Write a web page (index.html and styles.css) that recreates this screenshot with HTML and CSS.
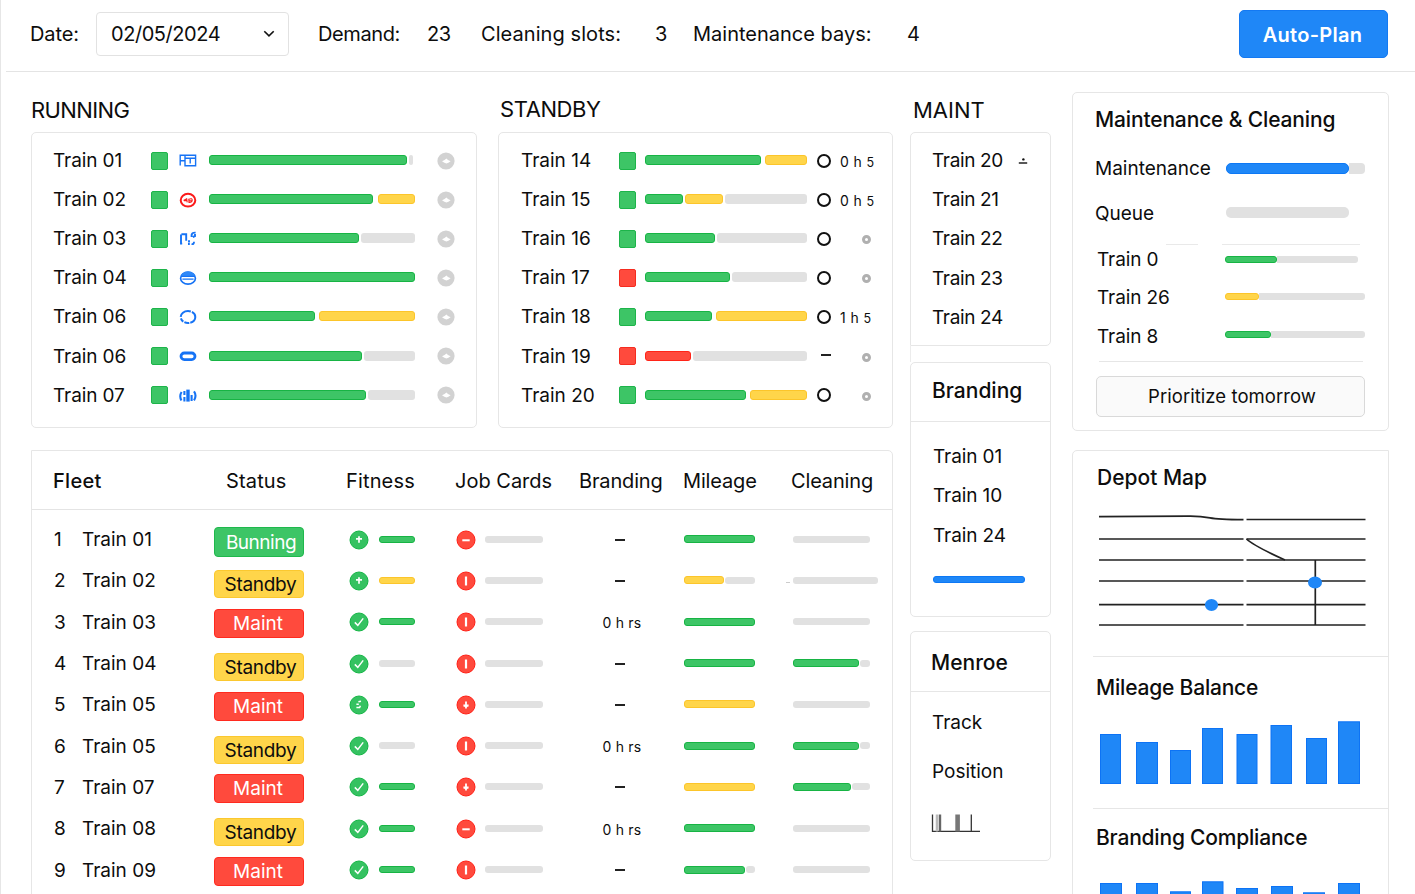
FILE: index.html
```html
<!DOCTYPE html>
<html lang="en">
<head>
<meta charset="utf-8">
<title>Train Induction Planner</title>
<link rel="stylesheet" href="styles.css">
</head>
<body>
<svg class="defs" aria-hidden="true">
  <symbol id="go" viewBox="0 0 18 18"><circle cx="9" cy="9" r="8.6" fill="#d2d2d2"/><path d="M5 9.2 7.6 8 9.4 6.6l1.6 1.4 2.6 1.2-2.2 1.6-2 .6-2-.6z" fill="#fff"/></symbol>
  <symbol id="plus" viewBox="0 0 20 20"><circle cx="10" cy="10" r="9" fill="#35c261" stroke="#14b545"/><path d="M10 6.2v6.6M7 8.9h6" stroke="#fff" stroke-width="1.7"/></symbol>
  <symbol id="check" viewBox="0 0 20 20"><circle cx="10" cy="10" r="9" fill="#35c261" stroke="#14b545"/><path d="m5.8 10.4 3 3 5.4-7" fill="none" stroke="#fff" stroke-width="1.5"/></symbol>
  <symbol id="dots" viewBox="0 0 20 20"><circle cx="10" cy="10" r="9" fill="#35c261" stroke="#14b545"/><path d="M9.4 6.8 12 6.2M7.4 9.2h2.4M7.4 12.6h3.2l.8-1.8" fill="none" stroke="#fff" stroke-width="1.5"/></symbol>
  <symbol id="minus" viewBox="0 0 20 20"><circle cx="10" cy="10" r="9" fill="#ff4a3d" stroke="#ff2016"/><path d="M6.3 10.3h7.4" stroke="#fff" stroke-width="2"/></symbol>
  <symbol id="bar" viewBox="0 0 20 20"><circle cx="10" cy="10" r="9" fill="#ff4a3d" stroke="#ff2016"/><path d="M10 5.5v9" stroke="#fff" stroke-width="2.2"/></symbol>
  <symbol id="down" viewBox="0 0 20 20"><circle cx="10" cy="10" r="9" fill="#ff4a3d" stroke="#ff2016"/><path d="M9.1 6.6h1.8v3h1.7v1.8l-1.7.6v1.4H9.1V12l-1.7-.6V9.6h1.7z" fill="#fff"/></symbol>
</svg>
<div class="app">
  <header class="topbar">
    <span class="lbl-date">Date:</span>
    <div class="select"><span>02/05/2024</span><svg width="12" height="8" viewBox="0 0 12 8"><path d="m1.3 1.2 4.7 4.6 4.7-4.6" fill="none" stroke="#111" stroke-width="1.6"/></svg></div>
    <span class="lbl-demand">Demand:</span><span class="val-demand">23</span>
    <span class="lbl-slots">Cleaning slots:</span><span class="val-slots">3</span>
    <span class="lbl-bays">Maintenance bays:</span><span class="val-bays">4</span>
    <button class="primary">Auto-Plan</button>
  </header>

  <main class="content">
    <div class="left">
      <div class="boards">
        <section class="running">
          <h2>RUNNING</h2>
          <div class="card board">
            <div class="run-row"><span>Train 01</span><i class="sq"></i>
              <svg class="kind" viewBox="0 0 18 18"><path d="M1.2 13.4V3.2H6M1.2 8.8H6M6 3.2h10.6v10.6H6zM6 6.2h10.6M11.2 6.2v5.4" fill="none" stroke="#1673f5" stroke-width="1.4"/></svg>
              <div class="track"><b class="g" style="width:198px"></b><b class="n" style="width:4px"></b></div><svg class="go"><use href="#go"/></svg></div>
            <div class="run-row"><span>Train 02</span><i class="sq"></i>
              <svg class="kind" viewBox="0 0 18 18"><ellipse cx="9" cy="9.2" rx="7.3" ry="6.4" fill="none" stroke="#fb1a1a" stroke-width="2"/><path d="m4.6 9.6 3.6-2M5 9.6h2.8M7.8 8l.4 3.4M9.8 8.2q3.6-1.4 3.4 1T10 11.4zM9.8 9.8h3" fill="none" stroke="#fb1a1a" stroke-width="1.1"/></svg>
              <div class="track"><b class="g" style="width:164px"></b><b class="y wide" style="width:37px"></b></div><svg class="go"><use href="#go"/></svg></div>
            <div class="run-row"><span>Train 03</span><i class="sq"></i>
              <svg class="kind" viewBox="0 0 18 18"><path d="M2 14.4V4.6M2.4 4.2h4.8v6.6M1.4 13.6h1.8M10 10.2v2.2M9 14h1.8M12.6 14q2.4.6 2.4-2.2M12.6 7V4.8q.4-2.4 4-2.2M16 4v2.2l-2.2.8" fill="none" stroke="#1673f5" stroke-width="1.9"/></svg>
              <div class="track"><b class="g" style="width:150px"></b><b class="n" style="width:54px"></b></div><svg class="go"><use href="#go"/></svg></div>
            <div class="run-row"><span>Train 04</span><i class="sq"></i>
              <svg class="kind" viewBox="0 0 18 18"><ellipse cx="9" cy="9.2" rx="7.4" ry="6" fill="#fff" stroke="#1673f5" stroke-width="1.7"/><path d="M2 7.2Q4 2.6 9 2.6t7 4.6z" fill="#2f88f7"/><path d="M2 7.4h14M3.4 10.2h11.2" stroke="#1673f5" stroke-width="1.2"/></svg>
              <div class="track"><b class="g" style="width:206px"></b></div><svg class="go"><use href="#go"/></svg></div>
            <div class="run-row"><span>Train 06</span><i class="sq"></i>
              <svg class="kind" viewBox="0 0 18 18"><ellipse cx="9" cy="9" rx="7.3" ry="6" fill="none" stroke="#1673f5" stroke-width="2" stroke-dasharray="8 1 5 1.2 4 1.6 13 1.2"/></svg>
              <div class="track"><b class="g" style="width:106px"></b><b class="y mid" style="width:96px"></b></div><svg class="go"><use href="#go"/></svg></div>
            <div class="run-row"><span>Train 06</span><i class="sq"></i>
              <svg class="kind" viewBox="0 0 18 18"><rect x="2" y="6" width="14" height="6.6" rx="3.3" fill="none" stroke="#1673f5" stroke-width="2.8"/></svg>
              <div class="track"><b class="g" style="width:153px"></b><b class="n" style="width:51px"></b></div><svg class="go"><use href="#go"/></svg></div>
            <div class="run-row"><span>Train 07</span><i class="sq"></i>
              <svg class="kind" viewBox="0 0 18 18"><path d="M2.6 6Q0 10 2.4 14.4M5.4 5v4M5.4 11v4.6M15 5.4q3 4.2 0 9M12.6 9v6" fill="none" stroke="#1673f5" stroke-width="2.1"/><path d="M9 3.6v12" stroke="#1673f5" stroke-width="3.4"/></svg>
              <div class="track"><b class="g" style="width:157px"></b><b class="n" style="width:47px"></b></div><svg class="go"><use href="#go"/></svg></div>
          </div>
        </section>
        <section class="standby">
          <h2>STANDBY</h2>
          <div class="card board">
            <div class="sb-row"><span>Train 14</span><i class="sq"></i><div class="track"><b class="g" style="width:116px"></b><b class="y mid" style="width:42px"></b></div><i class="ring"></i><small>0 h <em>5</em></small></div>
            <div class="sb-row"><span>Train 15</span><i class="sq"></i><div class="track"><b class="g" style="width:38px"></b><b class="y" style="width:38px"></b><b class="n" style="width:82px"></b></div><i class="ring"></i><small>0 h <em>5</em></small></div>
            <div class="sb-row"><span>Train 16</span><i class="sq"></i><div class="track"><b class="g" style="width:70px"></b><b class="n" style="width:90px"></b></div><i class="ring"></i><i class="dot"></i></div>
            <div class="sb-row"><span>Train 17</span><i class="sq red"></i><div class="track"><b class="g" style="width:85px"></b><b class="n" style="width:75px"></b></div><i class="ring"></i><i class="dot"></i></div>
            <div class="sb-row"><span>Train 18</span><i class="sq"></i><div class="track"><b class="g" style="width:67px"></b><b class="y mid" style="width:91px"></b></div><i class="ring"></i><small>1 h <em>5</em></small></div>
            <div class="sb-row"><span>Train 19</span><i class="sq red"></i><div class="track"><b class="r" style="width:46px"></b><b class="n" style="width:114px"></b></div><i class="dash"></i><i class="dot"></i></div>
            <div class="sb-row"><span>Train 20</span><i class="sq"></i><div class="track"><b class="g" style="width:101px"></b><b class="y mid" style="width:57px"></b></div><i class="ring"></i><i class="dot"></i></div>
          </div>
        </section>
      </div>

      <section class="card fleet">
        <div class="fleet-head"><strong>Fleet</strong><span>Status</span><span>Fitness</span><span>Job Cards</span><span>Branding</span><span>Mileage</span><span>Cleaning</span></div>
        <div class="fleet-row"><span>1</span><span>Train 01</span><div><span class="badge run">Bunning</span></div><div class="pair"><svg><use href="#plus"/></svg><b class="g fit"></b></div><div class="pair"><svg><use href="#minus"/></svg><b class="n job"></b></div><div class="brand"><i class="dash"></i></div><div class="thin"><b class="g" style="width:71px"></b></div><div class="thin"><b class="n" style="width:77px"></b></div></div>
        <div class="fleet-row"><span>2</span><span>Train 02</span><div><span class="badge stand">Standby</span></div><div class="pair"><svg><use href="#plus"/></svg><b class="y fit"></b></div><div class="pair"><svg><use href="#bar"/></svg><b class="n job"></b></div><div class="brand"><i class="dash"></i></div><div class="thin"><b class="y" style="width:40px"></b><b class="n rest" style="width:30px"></b></div><div class="thin"><i class="tick"></i><b class="n" style="width:85px"></b></div></div>
        <div class="fleet-row"><span>3</span><span>Train 03</span><div><span class="badge maint">Maint</span></div><div class="pair"><svg><use href="#check"/></svg><b class="g fit"></b></div><div class="pair"><svg><use href="#bar"/></svg><b class="n job"></b></div><div class="brand hrs">0 h rs</div><div class="thin"><b class="g" style="width:71px"></b></div><div class="thin"><b class="n" style="width:77px"></b></div></div>
        <div class="fleet-row"><span>4</span><span>Train 04</span><div><span class="badge stand">Standby</span></div><div class="pair"><svg><use href="#check"/></svg><b class="n fit"></b></div><div class="pair"><svg><use href="#bar"/></svg><b class="n job"></b></div><div class="brand"><i class="dash"></i></div><div class="thin"><b class="g" style="width:71px"></b></div><div class="thin"><b class="g" style="width:66px"></b><b class="n rest" style="width:10px"></b></div></div>
        <div class="fleet-row"><span>5</span><span>Train 05</span><div><span class="badge maint">Maint</span></div><div class="pair"><svg><use href="#dots"/></svg><b class="g fit"></b></div><div class="pair"><svg><use href="#down"/></svg><b class="n job"></b></div><div class="brand"><i class="dash"></i></div><div class="thin"><b class="y" style="width:71px"></b></div><div class="thin"><b class="n" style="width:77px"></b></div></div>
        <div class="fleet-row"><span>6</span><span>Train 05</span><div><span class="badge stand">Standby</span></div><div class="pair"><svg><use href="#check"/></svg><b class="n fit"></b></div><div class="pair"><svg><use href="#bar"/></svg><b class="n job"></b></div><div class="brand hrs">0 h rs</div><div class="thin"><b class="g" style="width:71px"></b></div><div class="thin"><b class="g" style="width:66px"></b><b class="n rest" style="width:10px"></b></div></div>
        <div class="fleet-row"><span>7</span><span>Train 07</span><div><span class="badge maint">Maint</span></div><div class="pair"><svg><use href="#check"/></svg><b class="g fit"></b></div><div class="pair"><svg><use href="#down"/></svg><b class="n job"></b></div><div class="brand"><i class="dash"></i></div><div class="thin"><b class="y" style="width:71px"></b></div><div class="thin"><b class="g" style="width:58px"></b><b class="n rest" style="width:18px"></b></div></div>
        <div class="fleet-row"><span>8</span><span>Train 08</span><div><span class="badge stand">Standby</span></div><div class="pair"><svg><use href="#check"/></svg><b class="g fit"></b></div><div class="pair"><svg><use href="#minus"/></svg><b class="n job"></b></div><div class="brand hrs">0 h rs</div><div class="thin"><b class="g" style="width:71px"></b></div><div class="thin"><b class="n" style="width:77px"></b></div></div>
        <div class="fleet-row"><span>9</span><span>Train 09</span><div><span class="badge maint">Maint</span></div><div class="pair"><svg><use href="#check"/></svg><b class="g fit"></b></div><div class="pair"><svg><use href="#bar"/></svg><b class="n job"></b></div><div class="brand"><i class="dash"></i></div><div class="thin"><b class="g" style="width:61px"></b><b class="n rest" style="width:9px"></b></div><div class="thin"><b class="n" style="width:77px"></b></div></div>
      </section>
    </div>

    <div class="middle">
      <h2>MAINT</h2>
      <section class="card maint-list">
        <div>Train 20<svg width="10" height="8" viewBox="0 0 10 8"><path d="M.8 6h8.4" stroke="#111" stroke-width="1.4"/><circle cx="5.4" cy="2.4" r="1.2" fill="#111"/></svg></div>
        <div>Train 21</div><div>Train 22</div><div>Train 23</div><div>Train 24</div>
      </section>
      <div class="link"></div>
      <section class="card branding">
        <h3>Branding</h3>
        <ul><li>Train 01</li><li>Train 10</li><li>Train 24</li></ul>
        <b class="blue"></b>
      </section>
      <section class="card menroe">
        <h3>Menroe</h3>
        <p>Track</p>
        <p>Position</p>
        <svg width="50" height="20" viewBox="0 0 50 20"><path d="M1.5 .5v16.8H49M40.3 .5v17" fill="none" stroke="#333" stroke-width="1.3"/><path d="M6 .5v17" stroke="#bbb" stroke-width="2.5"/><path d="M9 .5v17" stroke="#666" stroke-width="2.4"/><path d="M26.6 .5v17" stroke="#777" stroke-width="4.6"/></svg>
      </section>
    </div>

    <div class="right">
      <section class="card upkeep">
        <h3>Maintenance &amp; Cleaning</h3>
        <div class="meter big"><span>Maintenance</span><div class="bar"><b class="blue" style="width:123px"></b><b class="n" style="width:16px"></b></div></div>
        <div class="meter queue"><span>Queue</span><div class="bar"><b class="n" style="width:123px"></b></div></div>
        <div class="split"><i></i><i></i></div>
        <div class="meter t1"><span>Train 0</span><div class="bar"><b class="g" style="width:52px"></b><b class="n" style="width:81px"></b></div></div>
        <div class="meter t2"><span>Train 26</span><div class="bar"><b class="y" style="width:34px"></b><b class="n" style="width:106px"></b></div></div>
        <div class="meter t3"><span>Train 8</span><div class="bar"><b class="g" style="width:46px"></b><b class="n" style="width:94px"></b></div></div>
        <hr>
        <button class="secondary">Prioritize tomorrow</button>
      </section>
      <section class="card insights">
        <div class="depot">
          <h3>Depot Map</h3>
          <svg width="270" height="120" viewBox="0 0 270 120">
            <g fill="none" stroke="#222" stroke-width="1.7">
              <path d="M1 6.7 90 6.2Q102 6 112 7.8 120 9.4 145.500 9.6M148.500 9.5H267.500"/>
              <path d="M1 29H145.500M148.500 29H267.500M1 50H145.500M148.500 50H267.500M1 71H145.500M148.500 71H267.500M1 94.7H145.500M148.500 94.7H267.500M1 115H145.500M148.500 115H267.500"/>
              <path d="M148.500 29Q156 36 187 50M217.300 50V115"/>
            </g>
            <ellipse cx="217" cy="72.5" rx="7" ry="6" fill="#1f87f7"/><ellipse cx="113.5" cy="95" rx="6.6" ry="6" fill="#1f87f7"/>
          </svg>
        </div>
        <div class="mileage">
          <h3>Mileage Balance</h3>
          <svg width="264" height="64" viewBox="0 0 264 64"><g fill="#1f87f7" stroke="#0d73f5">
            <rect x="2.5" y="13.5" width="20" height="49"/><rect x="38.5" y="21.5" width="21" height="41"/><rect x="72.5" y="29.5" width="20" height="33"/><rect x="104.5" y="7.5" width="20" height="55"/><rect x="139" y="13.5" width="20" height="49"/><rect x="173" y="4.5" width="20.5" height="58"/><rect x="208.5" y="17.5" width="20" height="45"/><rect x="240.5" y="0.8" width="21" height="61.7"/></g></svg>
        </div>
        <div class="compliance">
          <h3>Branding Compliance</h3>
          <svg width="264" height="40" viewBox="0 0 264 40"><g fill="#1f87f7" stroke="#0d73f5">
            <rect x="2.5" y="2.5" width="21" height="49"/><rect x="38.5" y="2.5" width="21" height="49"/><rect x="72.5" y="10.8" width="20" height="40"/><rect x="104.5" y="0.8" width="20.5" height="50"/><rect x="138.5" y="7.5" width="21" height="49"/><rect x="173.5" y="5.5" width="21" height="49"/><rect x="205.5" y="11.8" width="21" height="49"/><rect x="240.5" y="2.5" width="21" height="49"/></g></svg>
        </div>
      </section>
    </div>
  </main>
</div>
</body>
</html>
```
FILE: styles.css
```css
* { box-sizing: border-box; }
html, body { margin: 0; height: 100%; overflow: hidden; background: #fff; }
body { font-family: Inter, "Liberation Sans", sans-serif; font-size: 19px; line-height: 1; color: #0d0d0d; }
h2, h3, p, ul { margin: 0; padding: 0; font-weight: 400; list-style: none; }
i, em { font-style: normal; }
b, i { display: block; flex: none; }
svg { display: block; flex: none; }
.defs { width: 0; height: 0; position: absolute; }
.app { height: 894px; overflow: hidden; border-left: 1px solid #e6e6e6; }

.topbar { height: 72px; margin-left: 5px; padding: 0 27px 3px 24px; display: flex; align-items: center; border-bottom: 1px solid #e4e4e4; font-size: 20px; white-space: nowrap; }
.topbar > span, .select span { flex: none; }
.select { width: 193px; height: 44px; margin-right: 29px; padding: 0 13px 0 14px; border: 1px solid #e2e2e2; border-radius: 4px; display: flex; align-items: center; justify-content: space-between; letter-spacing: -.45px; }
.lbl-date { width: 66px; letter-spacing: -.1px; }
.lbl-demand { width: 109px; letter-spacing: -.4px; }
.val-demand { width: 54px; letter-spacing: -.5px; }
.lbl-slots { width: 174px; letter-spacing: .07px; }
.val-slots { width: 38px; }
.lbl-bays { width: 214px; }
.val-bays { width: 20px; }
.primary { margin-left: auto; width: 149px; height: 48px; border: 1px solid #1479f2; border-radius: 5px; background: #1f87f7; color: #fff; font: 600 20px Inter, sans-serif; letter-spacing: .3px; padding: 2px 8px 0 6px; }

.content { display: flex; padding-left: 30px; }
.left { width: 862px; margin-right: 17px; }
.middle { width: 141px; margin-right: 21px; }
.right { width: 317px; padding-top: 20px; }
.card { border: 1px solid #e6e6e6; border-radius: 5px; background: #fff; }
h2 { height: 60px; padding-top: 27px; font-size: 22px; letter-spacing: -.6px; }
h3 { font-size: 21px; font-weight: 450; }

.boards { display: flex; justify-content: space-between; margin-bottom: 22px; }
.running { width: 446px; }
.standby { width: 395px; }
.standby h2 { padding-left: 2px; padding-top: 26px; letter-spacing: -.4px; }
.board { height: 296px; padding: 8px 0 0 21px; }
.run-row, .sb-row { height: 39.1px; display: flex; align-items: center; }
.run-row > span { width: 98px; letter-spacing: -.1px; }
.sb-row { padding-left: 1px; }
.sb-row > span { width: 98px; }
.sq { width: 17px; height: 18px; border-radius: 2px; background: #3dc566; border: 1px solid #1db44a; }
.sq.red { background: #ff4a3d; border-color: #f52c20; }
.kind { width: 18px; height: 18px; margin: 0 12px 0 11px; }
.track { display: flex; gap: 2px; width: 206px; height: 10px; margin-bottom: 1px; }
.track b { height: 10px; border-radius: 3px; }
.track .mid { margin-left: 1.5px; }
.track .wide { margin-left: 3px; }
.g { background: #3dc566; border: 1px solid #17b444; }
.y { background: #ffd54a; border: 1px solid #fcc52a; }
.r { background: #ff4a3d; border: 1px solid #ff2418; }
.n { background: #e1e1e1; }
.blue { background: #1f87f7; border: 1px solid #0d78f5; }
.go { width: 18px; height: 18px; margin-left: 22px; }
.sb-row .track { width: 162px; margin-left: 9px; }
.ring { width: 14px; height: 14px; margin-left: 10px; border: 2px solid #111; border-radius: 50%; }
.dash { width: 10px; height: 2px; background: #222; }
.sb-row .dash { margin: -2px 0 0 14px; }
small { margin-left: 9px; padding-top: 3px; font-size: 14px; letter-spacing: .4px; white-space: nowrap; }
small em { font-size: 12.5px; }
.dot { width: 9px; height: 9px; margin: 2px 0 0 31px; border: 3px solid #b0b0b0; border-radius: 50%; }

.fleet { height: 480px; border-top-left-radius: 0; }
.fleet-head { height: 59px; padding: 2px 0 0 21px; display: grid; grid-template-columns: 173px 120px 109px 124px 104px 108px 1fr; align-items: center; border-bottom: 1px solid #e4e4e4; font-size: 20px; margin-bottom: 9px; white-space: nowrap; }
.fleet-head strong { font-weight: 500; letter-spacing: .3px; }
.fleet-head span:nth-child(-n+3) { letter-spacing: .15px; }
.fleet-head span:nth-child(n+5) { letter-spacing: -.15px; }
.fleet-row { height: 41.3px; padding-left: 22px; display: grid; grid-template-columns: 28px 132px 135px 107px 122px 106px 109px 1fr; align-items: center; }
.badge { display: flex; align-items: center; justify-content: center; width: 90px; height: 29px; border-radius: 4px; }
.run { margin-top: 5px; padding-left: 4px; letter-spacing: -.5px; background: #3dc566; border: 1px solid #1fb84c; color: #fff; height: 30px; }
.stand { margin-top: 7px; padding: 1px 0 0 3px; letter-spacing: -.3px; background: #ffd54a; border: 1px solid #fbc82f; height: 28px; }
.badge.maint { margin-top: 3px; padding-right: 2px; background: #ff4a3d; border: 1px solid #ff2a1f; color: #fff; }
.pair { display: flex; align-items: center; }
.pair svg { width: 20px; height: 20px; margin-right: 10px; }
.pair b, .thin b { height: 7px; border-radius: 3px; margin-bottom: 1px; }
.fit { width: 36px; }
.job { width: 58px; margin-left: -1px; }
.brand { width: 84px; display: flex; justify-content: center; font-size: 14px; letter-spacing: .2px; }
.hrs { padding: 2px 0 0 4px; }
.thin { display: flex; align-items: center; }
.thin b { height: 8px; }
.thin .n { height: 7px; }
.thin .rest { margin-left: 1px; margin-right: -1px; }
.tick { width: 4px; height: 1px; margin: 3px 3px 0 -7px; background: #ccc; }

.middle h2 { padding-left: 3px; letter-spacing: 0; }
.maint-list { height: 214px; padding: 8px 0 0 21px; border-bottom-left-radius: 0; letter-spacing: -.35px; }
.maint-list div { height: 39.2px; display: flex; align-items: center; }
.maint-list svg { margin-left: 15px; }
.link { height: 16px; border-left: 1px solid #ececec; }
.branding { height: 255px; margin-bottom: 14px; }
.branding h3, .menroe h3 { height: 59px; padding-left: 21px; display: flex; align-items: center; border-bottom: 1px solid #e6e6e6; }
.branding h3 { padding-bottom: 3px; }
.branding ul { padding: 15px 0 0 22px; letter-spacing: -.1px; }
.branding li { height: 39.3px; display: flex; align-items: center; }
.branding .blue { width: 92px; height: 7px; margin: 21px 0 0 22px; border-radius: 3px; }
.menroe { height: 230px; }
.menroe h3 { height: 60px; padding-left: 20px; padding-top: 2px; }
.menroe p { height: 49px; padding-left: 21px; display: flex; align-items: center; }
.menroe p:first-of-type { margin-top: 6px; }
.menroe svg { margin: 18px 0 0 20px; }

.upkeep { height: 339px; padding: 16px 23px 0 22px; margin-bottom: 19px; }
.upkeep h3 { height: 21px; letter-spacing: -.15px; }
.meter { display: flex; align-items: center; white-space: nowrap; }
.meter span { width: 131px; }
.bar { display: flex; }
.bar b { height: 7px; border-radius: 3px; }
.bar .n { border-top-left-radius: 0; border-bottom-left-radius: 0; }
.big { height: 46px; margin-top: 15px; }
.big .bar b, .queue .bar b { height: 11px; border-radius: 5px; }
.big .bar .n { border-radius: 0 4px 4px 0; }
.queue { height: 44px; }
.queue .bar { margin-bottom: 2px; }
.split { display: flex; gap: 24px; margin: 9px 0 0 71px; }
.split i { width: 32px; height: 1px; background: #e9e9e9; }
.split i + i { width: 138px; }
.t1, .t2, .t3 { height: 38.5px; padding-left: 2px; }
.t1 span, .t2 span, .t3 span { width: 128px; letter-spacing: -.1px; }
.t1 { margin-top: -5px; }
.t2 .bar, .t3 .bar { margin-bottom: 3px; }
hr { margin: 5px 2px 14px 4px; border: 0; height: 1px; background: #e6e6e6; }
.secondary { width: 269px; height: 41px; margin-left: 1px; padding-left: 9px; border: 1px solid #d9d9d9; border-radius: 5px; background: #fafafa; color: #0d0d0d; font: 400 18.5px Inter, sans-serif; letter-spacing: .05px; }
.insights { height: 480px; padding-left: 20px; border-top-right-radius: 0; }
.depot { height: 206px; padding: 16px 0 0 4px; border-bottom: 1px solid #e6e6e6; }
.depot svg { margin: 22px 0 0 1px; }
.mileage { height: 152px; padding: 20px 0 0 3px; border-bottom: 1px solid #e6e6e6; }
.mileage h3, .compliance h3 { letter-spacing: -.2px; }
.mileage svg { margin: 23px 0 0 2px; }
.compliance { padding: 18px 0 0 3px; }
.compliance svg { margin: 33px 0 0 2px; }
```
